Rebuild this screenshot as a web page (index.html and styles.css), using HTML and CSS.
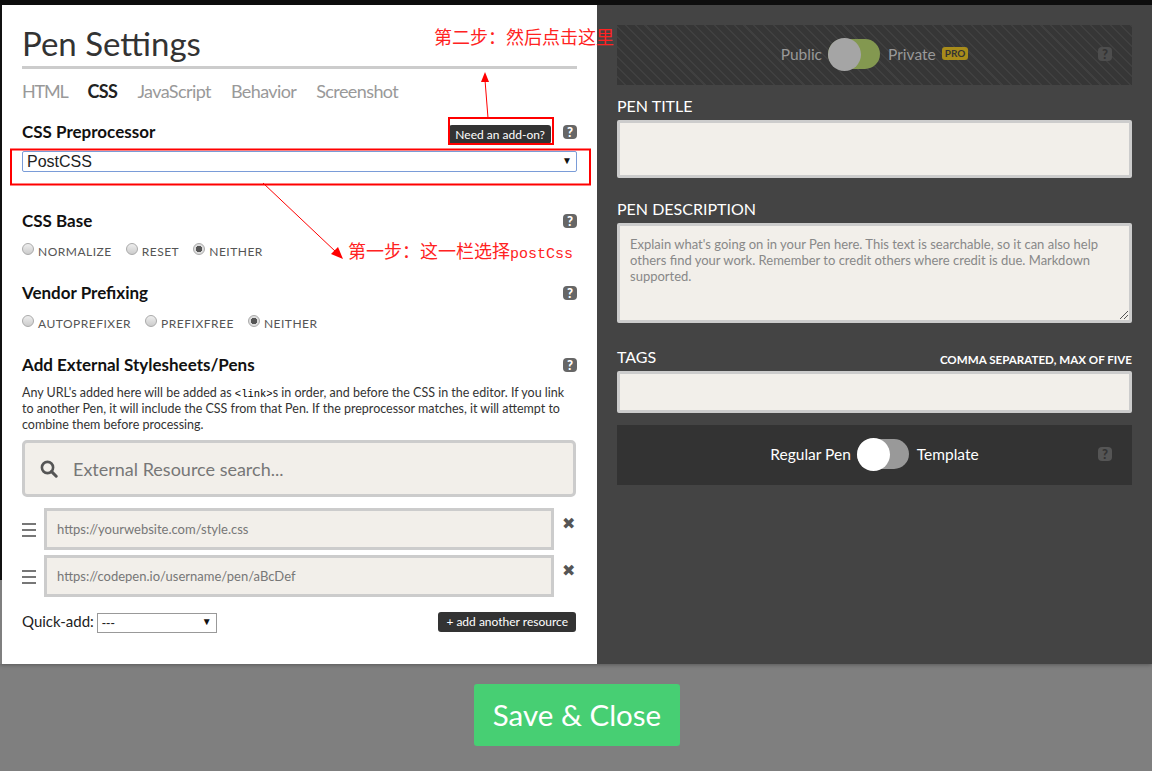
FILE: index.html
```html
<!DOCTYPE html>
<html lang="en">
<head>
    <meta charset="UTF-8">
    <title>Pen Settings</title>
    <link rel="stylesheet" href="styles.css">
</head>
<body>
    <div class="modal">
        <div class="left-panel">
            <h1 class="title">Pen Settings</h1>
            <nav class="tabs">
                <span>HTML</span>
                <span class="active">CSS</span>
                <span>JavaScript</span>
                <span>Behavior</span>
                <span>Screenshot</span>
            </nav>

            <div class="section-head head-pre">
                <h2>CSS Preprocessor</h2>
                <div class="head-right">
                    <span class="addon">Need an add-on?</span>
                    <span class="help">?</span>
                </div>
            </div>
            <div class="fake-select">PostCSS<span class="caret">▼</span></div>

            <div class="section-head head-base">
                <h2>CSS Base</h2>
                <span class="help">?</span>
            </div>
            <div class="radios">
                <span class="radio"></span><label>NORMALIZE</label>
                <span class="radio"></span><label>RESET</label>
                <span class="radio on"></span><label>NEITHER</label>
            </div>

            <div class="section-head head-vendor">
                <h2>Vendor Prefixing</h2>
                <span class="help">?</span>
            </div>
            <div class="radios">
                <span class="radio"></span><label>AUTOPREFIXER</label>
                <span class="radio"></span><label>PREFIXFREE</label>
                <span class="radio on"></span><label>NEITHER</label>
            </div>

            <div class="section-head head-ext">
                <h2>Add External Stylesheets/Pens</h2>
                <span class="help">?</span>
            </div>
            <p class="ext-text">Any URL's added here will be added as <code>&lt;link&gt;</code>s in order, and before the CSS in the editor. If you link to another Pen, it will include the CSS from that Pen. If the preprocessor matches, it will attempt to combine them before processing.</p>

            <div class="search">
                <svg class="search-icon" width="18" height="18" viewBox="0 0 18 18"><circle cx="7.5" cy="7.5" r="5.6" fill="none" stroke="#555" stroke-width="2.6"/><path d="M11.6 11.6 L16.2 16.2" stroke="#555" stroke-width="3" stroke-linecap="round"/></svg>
                <span>External Resource search...</span>
            </div>

            <div class="resource">
                <span class="drag"></span>
                <div class="res-input">https://yourwebsite.com/style.css</div>
                <span class="remove">✖</span>
            </div>
            <div class="resource">
                <span class="drag"></span>
                <div class="res-input">https://codepen.io/username/pen/aBcDef</div>
                <span class="remove">✖</span>
            </div>

            <div class="quick-row">
                <div class="quick">Quick-add: <span class="quick-select">---<span class="caret">▼</span></span></div>
                <span class="add-btn">+ add another resource</span>
            </div>
        </div>

        <div class="right-panel">
            <div class="switch-bar striped">
                <span class="faded">Public</span>
                <span class="toggle green"><span class="knob"></span></span>
                <span class="faded">Private</span>
                <span class="pro">PRO</span>
                <span class="help dim">?</span>
            </div>

            <label class="field-label">PEN TITLE</label>
            <div class="field title-field"></div>

            <label class="field-label desc-label">PEN DESCRIPTION</label>
            <div class="field desc-field">Explain what's going on in your Pen here. This text is searchable, so it can also help others find your work. Remember to credit others where credit is due. Markdown supported.
                <svg class="grip" width="10" height="10" viewBox="0 0 10 10"><path d="M1 9 L9 1 M5 9 L9 5" stroke="#555" stroke-width="1"/></svg>
            </div>

            <div class="tags-label">
                <label class="field-label">TAGS</label>
                <small>COMMA SEPARATED, MAX OF FIVE</small>
            </div>
            <div class="field tags-field"></div>

            <div class="switch-bar plain">
                <span>Regular Pen</span>
                <span class="toggle"><span class="knob"></span></span>
                <span>Template</span>
                <span class="help dim">?</span>
            </div>
        </div>
    </div>

    <div class="footer">
        <span class="save">Save &amp; Close</span>
    </div>

    <!-- Anotaciones rojas encima de la captura -->
    <svg class="notes" width="1152" height="771" viewBox="0 0 1152 771">
        <rect x="449" y="118" width="104" height="26" fill="none" stroke="#f00" stroke-width="2"/>
        <rect x="11" y="149.5" width="579" height="35" fill="none" stroke="#f00" stroke-width="2"/>
        <path d="M488 118 L485 80" stroke="#f00" fill="none"/>
        <path d="M485 72 L481 82 L489 82 Z" fill="#f00"/>
        <path d="M263 183 L336 252" stroke="#f00" fill="none"/>
        <path d="M343 259 L331 254 L338 247 Z" fill="#f00"/>
    </svg>
    <span class="note note-two">第二步：然后点击这里</span>
    <span class="note note-one">第一步：这一栏选择<span class="note-latin">postCss</span></span>
</body>
</html>
```
FILE: styles.css
```css
* {
    box-sizing: border-box;
}

body {
    margin: 0;
    height: 771px;
    overflow: hidden;
    background-color: #7f7f7f;
    font-family: "Lato", "Open Sans", sans-serif;
    position: relative;
}

.modal {
    display: flex;
    height: 664px;
    padding: 5px 0 0 2px;
    background: linear-gradient(#0d0d0d, #0d0d0d) top left / 100% 5px no-repeat, linear-gradient(#111, #111) top left / 2px 580px no-repeat;
    box-shadow: 0 1px 4px rgba(0, 0, 0, 0.3);
}

/* Panel izquierdo */
.left-panel {
    width: 595px;
    background-color: #fff;
    padding: 18px 20px 0 20px;
    color: #1a1a1a;
}

.title {
    margin: 0;
    height: 46px;
    border-bottom: 3px solid #ccc;
    font-size: 33px;
    font-weight: 400;
    line-height: 40px;
    color: #333;
}

.tabs {
    display: flex;
    gap: 20px;
    margin-top: 10px;
    font-size: 18px;
    letter-spacing: -0.6px;
    line-height: 24px;
    color: #999;
}

.tabs span:first-child {
    letter-spacing: -1.2px;
}

.tabs .active {
    color: #222;
    font-weight: 700;
}

.section-head {
    display: flex;
    justify-content: space-between;
    align-items: center;
    height: 20px;
}

.section-head h2 {
    margin: 0;
    font-size: 17px;
    font-weight: 700;
    color: #111;
}

.head-right {
    display: flex;
    align-items: center;
    gap: 12px;
}

.head-pre {
    margin-top: 18px;
}

.head-base {
    margin-top: 38px;
}

.head-vendor,
.head-ext {
    margin-top: 24px;
}

.addon {
    background-color: #333;
    color: #fff;
    font-size: 12px;
    line-height: 19px;
    height: 19px;
    padding: 0 6px;
    border-radius: 3px;
    margin-top: 6px;
}

.help {
    width: 14px;
    height: 14px;
    margin-top: 2px;
    border-radius: 4px;
    background-color: #666;
    color: #fff;
    font-size: 13px;
    font-weight: 900;
    line-height: 14px;
    text-align: center;
}

.fake-select {
    position: relative;
    margin-top: 10px;
    height: 21px;
    border: 1px solid #7a9cd8;
    border-radius: 2px;
    padding-left: 4px;
    font-family: "Liberation Sans", sans-serif;
    font-size: 16px;
    line-height: 19px;
    color: #222;
}

.caret {
    position: absolute;
    right: 4px;
    top: -1px;
    font-size: 10px;
    color: #111;
}

.radios {
    display: flex;
    align-items: center;
    margin-top: 12px;
    height: 16px;
    font-size: 12px;
    letter-spacing: 0.5px;
    color: #555;
}

.radios label {
    margin: 2px 14px 0 4px;
}

.radio {
    width: 12px;
    height: 12px;
    border-radius: 50%;
    border: 1px solid #aaa;
    background: linear-gradient(#eee, #ccc);
    margin-top: -3px;
}

.radio.on {
    background: radial-gradient(circle, #555 0 3px, #ddd 3.5px);
}

.ext-text {
    margin: 11px 0 0 0;
    font-size: 12.5px;
    line-height: 16px;
    color: #333;
}

.ext-text code {
    font-family: "Liberation Mono", monospace;
    font-size: 10.5px;
    line-height: 1;
    color: #000;
}

.search {
    display: flex;
    align-items: center;
    gap: 15px;
    margin: 7px 1px 0 0;
    height: 57px;
    padding-left: 15px;
    border: 3px solid #ccc;
    border-radius: 5px;
    background-color: #f2efea;
    font-size: 18px;
    color: #777;
}

.resource {
    display: flex;
    align-items: flex-start;
    margin-top: 7px;
    height: 40px;
}

.search + .resource {
    margin-top: 11px;
}

.drag {
    width: 14px;
    height: 14px;
    margin: 15px 8px 0 0;
    border-top: 2px solid #777;
    border-bottom: 2px solid #777;
    position: relative;
}

.drag::after {
    content: "";
    position: absolute;
    left: 0;
    right: 0;
    top: 4px;
    height: 2px;
    background-color: #777;
}

.res-input {
    width: 510px;
    height: 42px;
    border: 3px solid #ccc;
    background-color: #f2efea;
    padding-left: 10px;
    font-size: 13px;
    line-height: 36px;
    color: #777;
}

.remove {
    margin-left: 8px;
    font-size: 16px;
    line-height: 18px;
    margin-top: 6px;
    color: #555;
}

.quick-row {
    display: flex;
    justify-content: space-between;
    align-items: center;
    margin: 17px 1px 0 0;
}

.quick {
    font-size: 15px;
    color: #222;
}

.quick-select {
    display: inline-block;
    position: relative;
    width: 120px;
    height: 20px;
    margin-left: -1px;
    border: 1px solid #999;
    font-family: "Liberation Sans", sans-serif;
    font-size: 13px;
    line-height: 18px;
    padding-left: 4px;
    vertical-align: middle;
}

.add-btn {
    background-color: #333;
    color: #fff;
    font-size: 12px;
    line-height: 20px;
    height: 20px;
    margin-top: -2px;
    padding: 0 8px;
    border-radius: 3px;
}

/* Panel derecho */
.right-panel {
    flex: 1;
    background-color: #444;
    padding: 20px 20px 0 20px;
    color: #fff;
}

.switch-bar {
    position: relative;
    display: flex;
    align-items: center;
    justify-content: center;
    gap: 6px;
    height: 60px;
    padding-bottom: 3px;
    font-size: 15.5px;
}

.switch-bar .help {
    position: absolute;
    right: 20px;
    top: 22px;
    margin-top: 0;
}

.striped {
    background: repeating-linear-gradient(45deg, #363636 0 5.5px, #404040 5.5px 7px);
}

.plain {
    background-color: #333;
    margin-top: 12px;
}

.faded {
    color: #999;
}

.toggle {
    display: block;
    position: relative;
    width: 52px;
    height: 30px;
    margin-right: 2px;
    border-radius: 15px;
    background-color: #999;
}

.toggle.green {
    background-color: #839850;
}

.knob {
    position: absolute;
    left: 0;
    top: -1px;
    width: 33px;
    height: 33px;
    border-radius: 50%;
    background-color: #fff;
}

.green .knob {
    background-color: #a5a5a5;
}

.pro {
    background-color: #a88c1a;
    color: #333;
    font-size: 10px;
    font-weight: 700;
    line-height: 13px;
    padding: 0 3px;
    border-radius: 3px;
}

.help.dim {
    background-color: #555;
    color: #333;
}

.striped .help.dim {
    background-color: #4d4d4d;
}

.field-label {
    display: block;
    margin-top: 12px;
    font-size: 16px;
    line-height: 18px;
    color: #fff;
}

.field {
    margin-top: 5px;
    border: 3px solid #ccc;
    border-radius: 2px;
    background-color: #f2efea;
}

.title-field {
    height: 58px;
}

.desc-label {
    margin-top: 22px;
}

.desc-field {
    position: relative;
    height: 100px;
    padding: 10px 30px 10px 10px;
    font-size: 13px;
    line-height: 16px;
    color: #888;
}

.grip {
    position: absolute;
    right: 0;
    bottom: 0;
}

.tags-label {
    display: flex;
    justify-content: space-between;
    align-items: flex-end;
    margin-top: 25px;
}

.tags-label .field-label {
    margin-top: 0;
}

.tags-label small {
    font-size: 11.6px;
    font-weight: 700;
}

.tags-field {
    height: 42px;
}

/* Franja inferior */
.footer {
    display: flex;
    justify-content: center;
    padding: 20px 0 0 2px;
}

.save {
    width: 206px;
    background-color: #47cf73;
    color: #fff;
    font-size: 29.5px;
    line-height: 62px;
    height: 62px;
    text-align: center;
    border-radius: 3px;
}

/* Anotaciones */
.notes {
    position: absolute;
    left: 0;
    top: 0;
}

.note {
    position: absolute;
    color: #f22;
    font-family: "Noto Sans CJK SC", "Liberation Serif", serif;
    font-size: 18px;
    line-height: 20px;
    white-space: nowrap;
}

.note-latin {
    font-family: "Liberation Mono", monospace;
    font-size: 15px;
}

.note-two {
    left: 434px;
    top: 26px;
}

.note-one {
    left: 348px;
    top: 240px;
}
```
